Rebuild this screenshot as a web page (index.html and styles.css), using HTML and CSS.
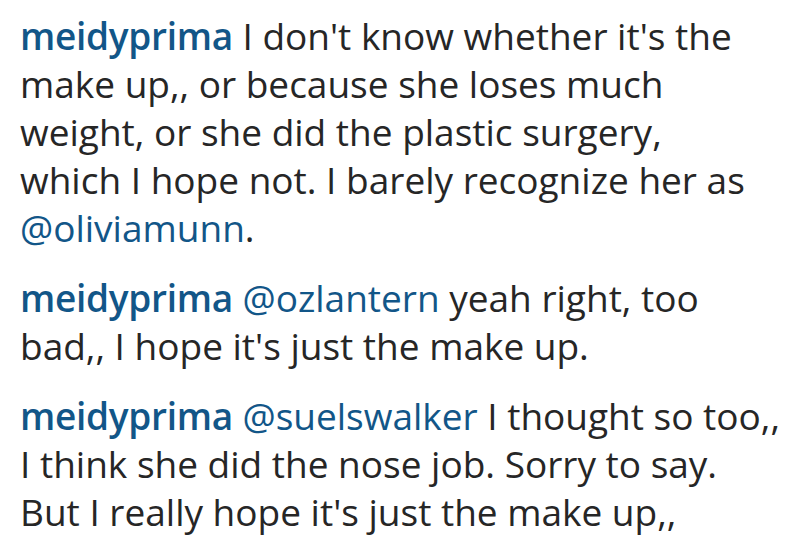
FILE: index.html
```html
<!DOCTYPE html>
<html>
<head>
<meta charset="utf-8">
<link rel="stylesheet" href="styles.css">
</head>
<body>
<div class="comments">
  <div class="comment">
    <span class="line"><a class="user">meidyprima</a> I don't know whether it's the</span>
    <span class="line">make up,, or because she loses much</span>
    <span class="line">weight, or she did the plastic surgery,</span>
    <span class="line">which I hope not. I barely recognize her as</span>
    <span class="line"><a class="mention">@oliviamunn</a>.</span>
  </div>
  <div class="comment">
    <span class="line"><a class="user">meidyprima</a> <a class="mention">@ozlantern</a> yeah right, too</span>
    <span class="line">bad,, I hope it's just the make up.</span>
  </div>
  <div class="comment">
    <span class="line"><a class="user">meidyprima</a> <a class="mention">@suelswalker</a> I thought so too,,</span>
    <span class="line">I think she did the nose job. Sorry to say.</span>
    <span class="line">But I really hope it's just the make up,,</span>
  </div>
</div>
</body>
</html>
```
FILE: styles.css
```css
html, body { margin: 0; padding: 0; background: #ffffff; }
body { width: 800px; height: 553px; overflow: hidden; }
.comments {
  display: flex;
  flex-direction: column;
  gap: 22px;
  padding: 12px 0 0 20px;
  font-family: "Open Sans", sans-serif;
  font-size: 37px;
  line-height: 48px;
  color: #262626;
}
.comment { display: flex; flex-direction: column; }
.line { display: block; white-space: nowrap; }
.user { color: #125688; font-weight: 600; letter-spacing: -0.3px; }
.mention { color: #125688; }
```
